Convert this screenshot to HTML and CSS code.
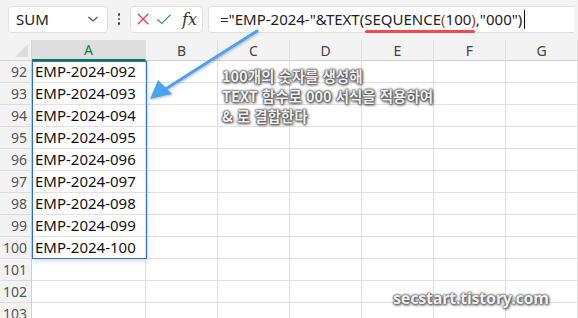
FILE: index.html
```html
<!DOCTYPE html>
<html lang="ko">
<head>
  <meta charset="UTF-8">
  <title>SEQUENCE 사번 만들기</title>
  <link rel="stylesheet" href="styles.css">
</head>
<body>
  <div class="app">
    <div class="formula-bar">
      <div class="name-box">
        <span>SUM</span>
        <svg class="chevron" width="12" height="8" viewBox="0 0 12 8"><path d="M1.5 2 L6 6 L10.5 2" fill="none" stroke="#555" stroke-width="1.3"/></svg>
      </div>
      <div class="dots"><i></i><i></i><i></i></div>
      <div class="fx-box">
        <svg width="16" height="16" viewBox="0 0 16 16"><path d="M2 2 L14 14 M14 2 L2 14" stroke="#e0443e" stroke-width="1.4" fill="none"/></svg>
        <svg width="18" height="16" viewBox="0 0 18 16"><path d="M1.5 8.5 L6.5 13 L16.5 3" stroke="#2e9e4f" stroke-width="1.4" fill="none"/></svg>
        <span class="fx">fx</span>
      </div>
      <div class="formula-input">
        <span>="EMP-2024-"&amp;TEXT(<span class="marked">SEQUENCE<span class="paren">(</span>100<span class="paren">)</span></span>,"000")</span><span class="caret"></span>
      </div>
    </div>

    <div class="sheet" id="sheet"></div>

    <div class="selection"></div>

    <svg class="arrow" width="578" height="318" viewBox="0 0 578 318">
      <defs>
        <filter id="soft" x="-20%" y="-20%" width="140%" height="140%">
          <feDropShadow dx="1" dy="1" stdDeviation="1" flood-color="#000" flood-opacity="0.25"/>
        </filter>
      </defs>
      <g filter="url(#soft)">
        <line x1="257" y1="31" x2="164" y2="90" stroke="#4ba2f2" stroke-width="3" stroke-linecap="round"/>
        <path d="M150 99 L158 80 L172 94 Z" fill="#4ba2f2"/>
      </g>
    </svg>

    <div class="note">
      100개의 숫자를 생성해<br>
      TEXT 함수로 000 서식을 적용하여<br>
      &amp; 로 결합한다
    </div>

    <div class="watermark">secstart.tistory.com</div>
  </div>

  <script>
    const sheet = document.getElementById("sheet");
    const cols = ["A", "B", "C", "D", "E", "F", "G"];

    let html = '<div class="corner"><span></span></div>';
    cols.forEach((c) => {
      html += `<div class="col-head${c === "A" ? " active" : ""}">${c}</div>`;
    });

    for (let r = 92; r <= 103; r++) {
      html += `<div class="row-head">${r}</div>`;
      cols.forEach((c) => {
        const value = c === "A" && r <= 100 ? "EMP-2024-" + String(r).padStart(3, "0") : "";
        html += `<div class="cell">${value}</div>`;
      });
    }
    sheet.innerHTML = html;
  </script>
</body>
</html>
```

FILE: styles.css
```css
body {
  margin: 0;
  font-family: "Noto Sans", "Open Sans", sans-serif;
  background: #fff;
}

.app {
  position: relative;
  width: 578px;
  height: 318px;
  overflow: hidden;
}

.formula-bar {
  display: flex;
  align-items: center;
  height: 40px;
  padding: 0 0 0 8px;
  box-sizing: border-box;
  background: #f3f3f3;
}

.name-box,
.fx-box,
.formula-input {
  height: 27px;
  box-sizing: border-box;
  background: #fff;
  border: 1px solid #e0e0e0;
  border-radius: 4px;
  display: flex;
  align-items: center;
  margin-top: -2px;
}

.name-box {
  width: 100px;
  padding: 0 8px 0 7px;
  justify-content: space-between;
  font-size: 15px;
  color: #222;
}

.dots {
  width: 22px;
  display: flex;
  flex-direction: column;
  align-items: center;
  gap: 2px;
  margin-top: -2px;
}

.dots i {
  width: 2.5px;
  height: 2.5px;
  background: #444;
  border-radius: 50%;
}

.fx-box {
  width: 73px;
  padding: 0 5px 0 5px;
  gap: 6px;
}

.fx {
  font-family: "DejaVu Serif", "Liberation Serif", serif;
  font-style: italic;
  font-size: 16px;
  color: #333;
  margin-left: 4px;
}

.formula-input {
  width: 366px;
  margin-left: 5px;
  padding-left: 11px;
  font-size: 15px;
  color: #222;
  border-right: none;
  border-radius: 4px 0 0 4px;
  white-space: nowrap;
}

.marked {
  position: relative;
}

.marked::after {
  content: "";
  position: absolute;
  left: 1px;
  right: 1px;
  bottom: -4px;
  height: 3px;
  border-radius: 2px;
  background: #f04a4f;
}

.paren {
  color: #c0392b;
}

.caret {
  display: inline-block;
  width: 1px;
  height: 19px;
  background: #000;
  margin-left: 2px;
}

.sheet {
  display: grid;
  grid-template-columns: 32px 114px repeat(6, 72px);
  grid-template-rows: 21px;
  grid-auto-rows: 22px;
}

.corner {
  background: #f3f3f3;
  border-right: 1px solid #d6d6d6;
  border-bottom: 1px solid #d6d6d6;
  position: relative;
}

.corner span {
  position: absolute;
  right: 3px;
  bottom: 3px;
  width: 0;
  height: 0;
  border-left: 13px solid transparent;
  border-bottom: 13px solid #dcdcdc;
}

.col-head {
  background: #f3f3f3;
  border-right: 1px solid #dcdcdc;
  border-bottom: 1px solid #cfcfcf;
  font-size: 14px;
  color: #444;
  display: flex;
  align-items: center;
  justify-content: center;
}

.col-head.active {
  background: #dedede;
  color: #107c41;
  border-bottom: 2px solid #107c41;
}

.row-head {
  background: #f3f3f3;
  border-right: 1px solid #d0d0d0;
  border-bottom: 1px solid #dcdcdc;
  font-size: 14px;
  color: #555;
  text-align: right;
  padding-right: 4px;
  line-height: 22px;
}

.cell {
  border-right: 1px solid #e1e1e1;
  border-bottom: 1px solid #e1e1e1;
  font-size: 15px;
  color: #111;
  line-height: 21px;
  padding-left: 3px;
  white-space: nowrap;
}

.selection {
  position: absolute;
  left: 32px;
  top: 61px;
  width: 115px;
  height: 198px;
  box-sizing: border-box;
  border: 1px solid #2a6fd6;
  box-shadow: 1px 2px 4px rgba(0, 0, 0, 0.15);
}

.arrow {
  position: absolute;
  left: 0;
  top: 0;
  pointer-events: none;
}

.note {
  position: absolute;
  left: 222px;
  top: 66px;
  font-family: "Noto Sans CJK KR", "Noto Sans", sans-serif;
  font-weight: bold;
  font-size: 14.5px;
  line-height: 20px;
  color: #f0f0f0;
  text-shadow: 0 0 1px #444, 0 0 2px #555, 0 0 3px #555, 1px 1px 3px #333;
}

.watermark {
  position: absolute;
  left: 393px;
  top: 287px;
  font-family: "Noto Sans", sans-serif;
  font-weight: bold;
  font-size: 16px;
  letter-spacing: -0.2px;
  color: #f0f0f0;
  text-shadow: 0 0 1px #555, 0 0 2px #666, 0 0 3px #666, 1px 1px 3px #333;
}
```
